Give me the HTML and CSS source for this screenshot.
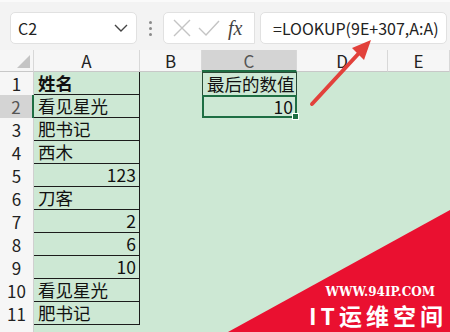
FILE: index.html
```html
<!DOCTYPE html>
<html lang="zh-CN">
<head>
    <meta charset="UTF-8">
    <title>LOOKUP</title>
    <link rel="stylesheet" href="styles.css">
</head>
<body>
    <div class="toolbar">
        <div class="name-box">
            <span>C2</span>
            <svg class="chevron" width="14" height="8" viewBox="0 0 14 8"><path d="M1 1 L7 7 L13 1" fill="none" stroke="#444" stroke-width="1.4"/></svg>
        </div>
        <div class="grip"><i></i><i></i><i></i></div>
        <div class="fx-box">
            <svg width="20" height="20" viewBox="0 0 20 20"><path d="M2 2 L18 18 M18 2 L2 18" stroke="#c4c4c4" stroke-width="1.4"/></svg>
            <svg width="22" height="18" viewBox="0 0 22 18"><path d="M1 9 L8 16 L21 2" fill="none" stroke="#c4c4c4" stroke-width="1.4"/></svg>
            <span class="fx">fx</span>
        </div>
        <div class="formula">=LOOKUP(9E+307,A:A)</div>
    </div>

    <div class="sheet">
        <div class="corner"><span></span></div>
        <div class="col-head">A</div>
        <div class="col-head">B</div>
        <div class="col-head active">C</div>
        <div class="col-head">D</div>
        <div class="col-head">E</div>

        <div class="row-head">1</div>
        <div class="cell a bold">姓名</div>
        <div class="cell"></div>
        <div class="cell title">最后的数值</div>
        <div class="cell"></div>
        <div class="cell"></div>

        <div class="row-head active">2</div>
        <div class="cell a">看见星光</div>
        <div class="cell"></div>
        <div class="cell selected num">10<span class="handle"></span></div>
        <div class="cell"></div>
        <div class="cell"></div>

        <div class="row-head">3</div>
        <div class="cell a">肥书记</div>
        <div class="cell"></div><div class="cell"></div><div class="cell"></div><div class="cell"></div>

        <div class="row-head">4</div>
        <div class="cell a">西木</div>
        <div class="cell"></div><div class="cell"></div><div class="cell"></div><div class="cell"></div>

        <div class="row-head">5</div>
        <div class="cell a num">123</div>
        <div class="cell"></div><div class="cell"></div><div class="cell"></div><div class="cell"></div>

        <div class="row-head">6</div>
        <div class="cell a">刀客</div>
        <div class="cell"></div><div class="cell"></div><div class="cell"></div><div class="cell"></div>

        <div class="row-head">7</div>
        <div class="cell a num">2</div>
        <div class="cell"></div><div class="cell"></div><div class="cell"></div><div class="cell"></div>

        <div class="row-head">8</div>
        <div class="cell a num">6</div>
        <div class="cell"></div><div class="cell"></div><div class="cell"></div><div class="cell"></div>

        <div class="row-head">9</div>
        <div class="cell a num">10</div>
        <div class="cell"></div><div class="cell"></div><div class="cell"></div><div class="cell"></div>

        <div class="row-head">10</div>
        <div class="cell a">看见星光</div>
        <div class="cell"></div><div class="cell"></div><div class="cell"></div><div class="cell"></div>

        <div class="row-head">11</div>
        <div class="cell a">肥书记</div>
        <div class="cell"></div><div class="cell"></div><div class="cell"></div><div class="cell"></div>

        <div class="row-head"></div>
        <div class="cell"></div><div class="cell"></div><div class="cell"></div><div class="cell"></div><div class="cell"></div>
    </div>

    <!-- annotation arrow -->
    <svg class="arrow" width="450" height="332" viewBox="0 0 450 332">
        <line x1="312" y1="104" x2="360" y2="52" stroke="#e2413b" stroke-width="4" stroke-linecap="round"/>
        <polygon points="371,40 352,48 364,60" fill="#e2413b"/>
    </svg>

    <div class="wm-corner"></div>
    <div class="watermark">
        <div class="wm-url">WWW.94IP.COM</div>
        <div class="wm-name">IT运维空间</div>
    </div>
</body>
</html>
```

FILE: styles.css
```css
body {
    margin: 0;
    width: 450px;
    height: 332px;
    overflow: hidden;
    background: #f3f3f3;
    font-family: "Noto Sans CJK SC", sans-serif;
    color: #111;
    position: relative;
}

.toolbar {
    height: 50px;
    display: flex;
    align-items: flex-start;
    padding: 10px 0 0 10px;
    box-sizing: border-box;
    border-top: 2px solid #fafafa;
}

.name-box {
    width: 127px;
    height: 32px;
    box-sizing: border-box;
    background: #fff;
    border: 1px solid #e1e1e1;
    border-radius: 5px;
    display: flex;
    align-items: center;
    justify-content: space-between;
    padding: 0 8px 0 7px;
    font-size: 16px;
    color: #222;
}

.grip {
    width: 26px;
    height: 32px;
    display: flex;
    flex-direction: column;
    align-items: center;
    justify-content: center;
    gap: 3px;
}

.grip i {
    width: 3px;
    height: 3px;
    border-radius: 50%;
    background: #8a8a8a;
}

.fx-box {
    width: 92px;
    height: 32px;
    box-sizing: border-box;
    background: #fff;
    border: 1px solid #e1e1e1;
    border-radius: 5px 0 0 5px;
    display: flex;
    align-items: center;
    gap: 6px;
    padding-left: 8px;
}

.fx {
    font-family: "Liberation Serif", serif;
    font-style: italic;
    font-size: 20px;
    color: #444;
    margin-left: 2px;
}

.formula {
    width: 187px;
    height: 32px;
    box-sizing: border-box;
    margin-left: 5px;
    background: #fff;
    border: 1px solid #e1e1e1;
    border-radius: 5px;
    padding-left: 12px;
    font-size: 16px;
    line-height: 30px;
    color: #222;
}

.sheet {
    display: grid;
    grid-template-columns: 34px 106px 62px 95px 91px 62px;
    grid-template-rows: 22px repeat(11, 23px) 10px;
    background: #cde8d4;
}

.corner {
    background: #f6f6f6;
    border-right: 1px solid #d8d8d8;
    border-bottom: 1px solid #c8c8c8;
    position: relative;
}

.corner span {
    position: absolute;
    right: 3px;
    bottom: 3px;
    width: 0;
    height: 0;
    border-left: 13px solid transparent;
    border-bottom: 13px solid #c4c4c4;
}

.col-head {
    background: #f6f6f6;
    border-right: 1px solid #d8d8d8;
    border-bottom: 1px solid #c8c8c8;
    font-size: 17px;
    line-height: 21px;
    text-align: center;
    color: #222;
}

.col-head.active {
    background: #d4d4d4;
    border-bottom: 2px solid #1e6e43;
    color: #555;
}

.row-head {
    background: #f6f6f6;
    border-right: 1px solid #d0d0d0;
    font-size: 17px;
    line-height: 23px;
    text-align: center;
    color: #222;
}

.row-head.active {
    background: #d4d4d4;
    border-right: 2px solid #1e6e43;
    color: #555;
}

.cell {
    font-size: 17.5px;
    line-height: 22px;
    padding: 0 3px 0 4px;
    white-space: nowrap;
    box-sizing: border-box;
    position: relative;
}

.cell.a {
    border-right: 1px solid #1c1c1c;
    border-bottom: 1px solid #1c1c1c;
}

.bold {
    font-weight: bold;
}

.num {
    text-align: right;
}

.title {
    border: 1px solid #2a4a35;
    border-bottom: none;
    line-height: 21px;
}

.selected {
    border: 2px solid #1e6e43;
    line-height: 19px;
    padding-right: 2px;
}

.handle {
    position: absolute;
    right: -4px;
    bottom: -4px;
    width: 5px;
    height: 5px;
    background: #1e6e43;
    border: 1px solid #fff;
}

.arrow {
    position: absolute;
    left: 0;
    top: 0;
}

.wm-corner {
    position: absolute;
    right: 0;
    bottom: 0;
    width: 222px;
    height: 122px;
    background: #ea1030;
    clip-path: polygon(100% 0, 100% 100%, 0 100%);
}

.watermark {
    position: absolute;
    right: 3px;
    bottom: 0;
    color: #fff;
    display: flex;
    flex-direction: column;
    align-items: flex-end;
}

.wm-url {
    font-family: "DejaVu Serif", serif;
    font-weight: bold;
    font-size: 12px;
    line-height: 14px;
    margin-right: 12px;
}

.wm-name {
    font-weight: bold;
    font-size: 23px;
    line-height: 33px;
    letter-spacing: 4px;
}
```
